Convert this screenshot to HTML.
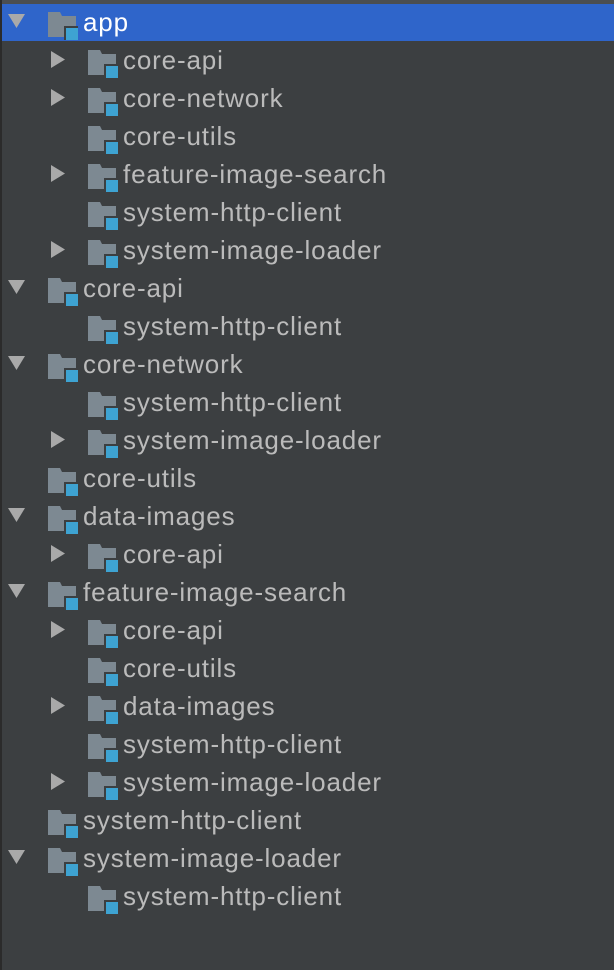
<!DOCTYPE html>
<html><head><style>
body{margin:0;width:614px;height:970px;background:#3c3f41;overflow:hidden;position:relative;font-family:"Liberation Sans",sans-serif;}
.strip{position:absolute;left:0;top:0;width:2px;height:970px;background:#2b2b2b}
.topb{position:absolute;left:0;top:0;width:614px;height:4px;background:#4b4e50}
.sel{position:absolute;left:2px;top:4px;width:612px;height:37px;background:#2f65ca}
.row{position:absolute;height:38px;left:0;width:614px}
.row span{position:absolute;top:4px;font-size:26px;color:#bbbbbb;white-space:nowrap;letter-spacing:0.85px}
.row svg{position:absolute}
</style></head><body>
<div class="topb"></div><div class="strip"></div><div class="sel"></div>
<div id="t"></div>
<script>
const rows=[[0,'d','app'],[1,'r','core-api'],[1,'r','core-network'],[1,'','core-utils'],[1,'r','feature-image-search'],[1,'','system-http-client'],[1,'r','system-image-loader'],
[0,'d','core-api'],[1,'','system-http-client'],[0,'d','core-network'],[1,'','system-http-client'],[1,'r','system-image-loader'],[0,'','core-utils'],
[0,'d','data-images'],[1,'r','core-api'],[0,'d','feature-image-search'],[1,'r','core-api'],[1,'','core-utils'],[1,'r','data-images'],[1,'','system-http-client'],[1,'r','system-image-loader'],
[0,'','system-http-client'],[0,'d','system-image-loader'],[1,'','system-http-client']];
let h='';
rows.forEach((r,i)=>{const top=3+38*i,l=r[0]*40;
h+=`<div class="row" style="top:${top}px">`;
if(r[1]=='d')h+=`<svg style="left:${8+l}px;top:10px" width="18" height="16"><polygon points="0,1 17,1 8.5,15" fill="#a9a9a9"/></svg>`;
if(r[1]=='r')h+=`<svg style="left:${50+l-40}px;top:10px" width="16" height="18"><polygon points="1,0 15,8.5 1,17" fill="#a9a9a9"/></svg>`;
h+=`<svg style="left:${48+l}px;top:9px" width="32" height="30"><path d="M0 0H12L14 4H28V25H0Z" fill="#7d8992"/><rect x="16" y="14" width="14" height="14" fill="#3c3f41"/><rect x="18" y="16" width="12" height="12" fill="#3ea3d2"/></svg>`;
h+=`<span style="left:${83+l}px;${i==0?'color:#fff':''}">${r[2]}</span></div>`;});
document.getElementById('t').innerHTML=h;
</script>
</body></html>
